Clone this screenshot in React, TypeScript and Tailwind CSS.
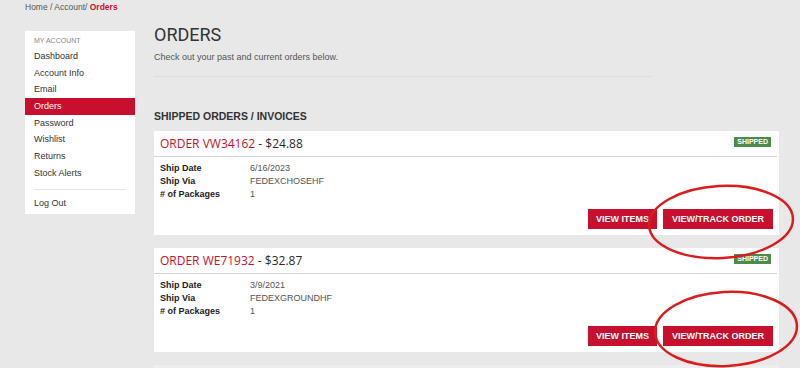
import React from "react";

const sideNav = [
  { name: "Dashboard" },
  { name: "Account Info" },
  { name: "Email" },
  { name: "Orders", active: true },
  { name: "Password" },
  { name: "Wishlist" },
  { name: "Returns" },
  { name: "Stock Alerts" },
];

const orders = [
  { id: "VW34162", total: "$24.88", date: "6/16/2023", via: "FEDEXCHOSEHF", packages: "1" },
  { id: "WE71932", total: "$32.87", date: "3/9/2021", via: "FEDEXGROUNDHF", packages: "1" },
];

const OrderCard = ({ order }: { order: (typeof orders)[number] }) => (
  <div className="bg-white w-[625px]">
    <div className="h-[26px] flex justify-between items-start pt-[5px] px-[6px] border-b border-[#d6d6d6] mr-[2px]">
      <div className="font-['Open_Sans',sans-serif] text-[12px] leading-[16px] text-[#2b2b2b]">
        <span className="text-[#c8102e]">ORDER {order.id}</span> - {order.total}
      </div>
      <span className="mt-[1px] bg-[#4a8c4a] text-white font-bold text-[7px] leading-[10px] px-[3px] h-[10px]">
        SHIPPED
      </span>
    </div>
    <div className="px-[6px] pt-[5px] text-[9px] leading-[13px] text-[#222]">
      <div className="flex">
        <span className="w-[90px] font-bold">Ship Date</span>
        <span className="text-[#555]">{order.date}</span>
      </div>
      <div className="flex">
        <span className="w-[90px] font-bold">Ship Via</span>
        <span className="text-[#555]">{order.via}</span>
      </div>
      <div className="flex">
        <span className="w-[90px] font-bold"># of Packages</span>
        <span className="text-[#555]">{order.packages}</span>
      </div>
    </div>
    <div className="flex justify-end gap-[6px] px-[6px] pt-[8px] pb-[6px]">
      <button className="h-[20px] px-[8px] bg-[#c8102e] text-white font-bold text-[9px] leading-[20px]">
        VIEW ITEMS
      </button>
      <button className="h-[20px] px-[9px] bg-[#c8102e] text-white font-bold text-[9px] leading-[20px]">
        VIEW/TRACK ORDER
      </button>
    </div>
  </div>
);

export default function App() {
  return (
    <div className="relative w-[800px] h-[368px] overflow-hidden bg-[#e8e8e8] font-['Liberation_Sans',Arial,sans-serif]">
      {/* breadcrumb */}
      <div className="pl-[25px] h-[15px] text-[8.5px] leading-[15px] text-[#555]">
        Home / Account/ <span className="font-bold text-[#c8102e]">Orders</span>
      </div>

      <div className="flex gap-[19px] pl-[25px] mt-[9px]">
        {/* sidebar */}
        <aside className="w-[110px] mt-[7px] bg-white self-start pb-[3px]">
          <div className="pl-[9px] pt-[3px] h-[17px] text-[7px] leading-[14px] text-[#888] uppercase">
            My Account
          </div>
          {sideNav.map((item, index) => (
            <div
              key={index}
              className={
                item.active
                  ? "h-[16.7px] pl-[9px] text-[9px] leading-[16.7px] bg-[#c8102e] text-white"
                  : "h-[16.7px] pl-[9px] text-[9px] leading-[16.7px] text-[#333]"
              }
            >
              {item.name}
            </div>
          ))}
          <div className="mx-[9px] mt-[7px] h-px bg-[#e4e4e4]" />
          <div className="pl-[9px] mt-[5px] h-[16.7px] text-[9px] leading-[16.7px] text-[#333]">Log Out</div>
        </aside>

        {/* main */}
        <main className="w-[625px]">
          <h1 className="font-['Roboto',sans-serif] text-[18px] leading-[22px] text-[#333]">ORDERS</h1>
          <p className="mt-[5px] text-[9px] leading-[12px] text-[#555]">
            Check out your past and current orders below.
          </p>
          <div className="mt-[13px] w-[497px] h-px bg-[#dcdcdc]" />
          <h2 className="mt-[32px] font-bold text-[10.5px] leading-[14px] text-[#333]">
            SHIPPED ORDERS / INVOICES
          </h2>
          <div className="mt-[8px] flex flex-col gap-[13px]">
            {orders.map((order) => (
              <OrderCard key={order.id} order={order} />
            ))}
            <div className="h-[20px] bg-[#eeeeee]" />
          </div>
        </main>
      </div>

      {/* annotation circles */}
      <svg className="absolute inset-0 pointer-events-none" width="800" height="368" viewBox="0 0 800 368">
        <ellipse cx="721" cy="222" rx="72" ry="36" fill="none" stroke="#dc1c1c" strokeWidth="2.5" transform="rotate(-3 721 222)" />
        <ellipse cx="726" cy="329" rx="71" ry="37" fill="none" stroke="#dc1c1c" strokeWidth="2.5" transform="rotate(-3 726 329)" />
      </svg>
    </div>
  );
}
